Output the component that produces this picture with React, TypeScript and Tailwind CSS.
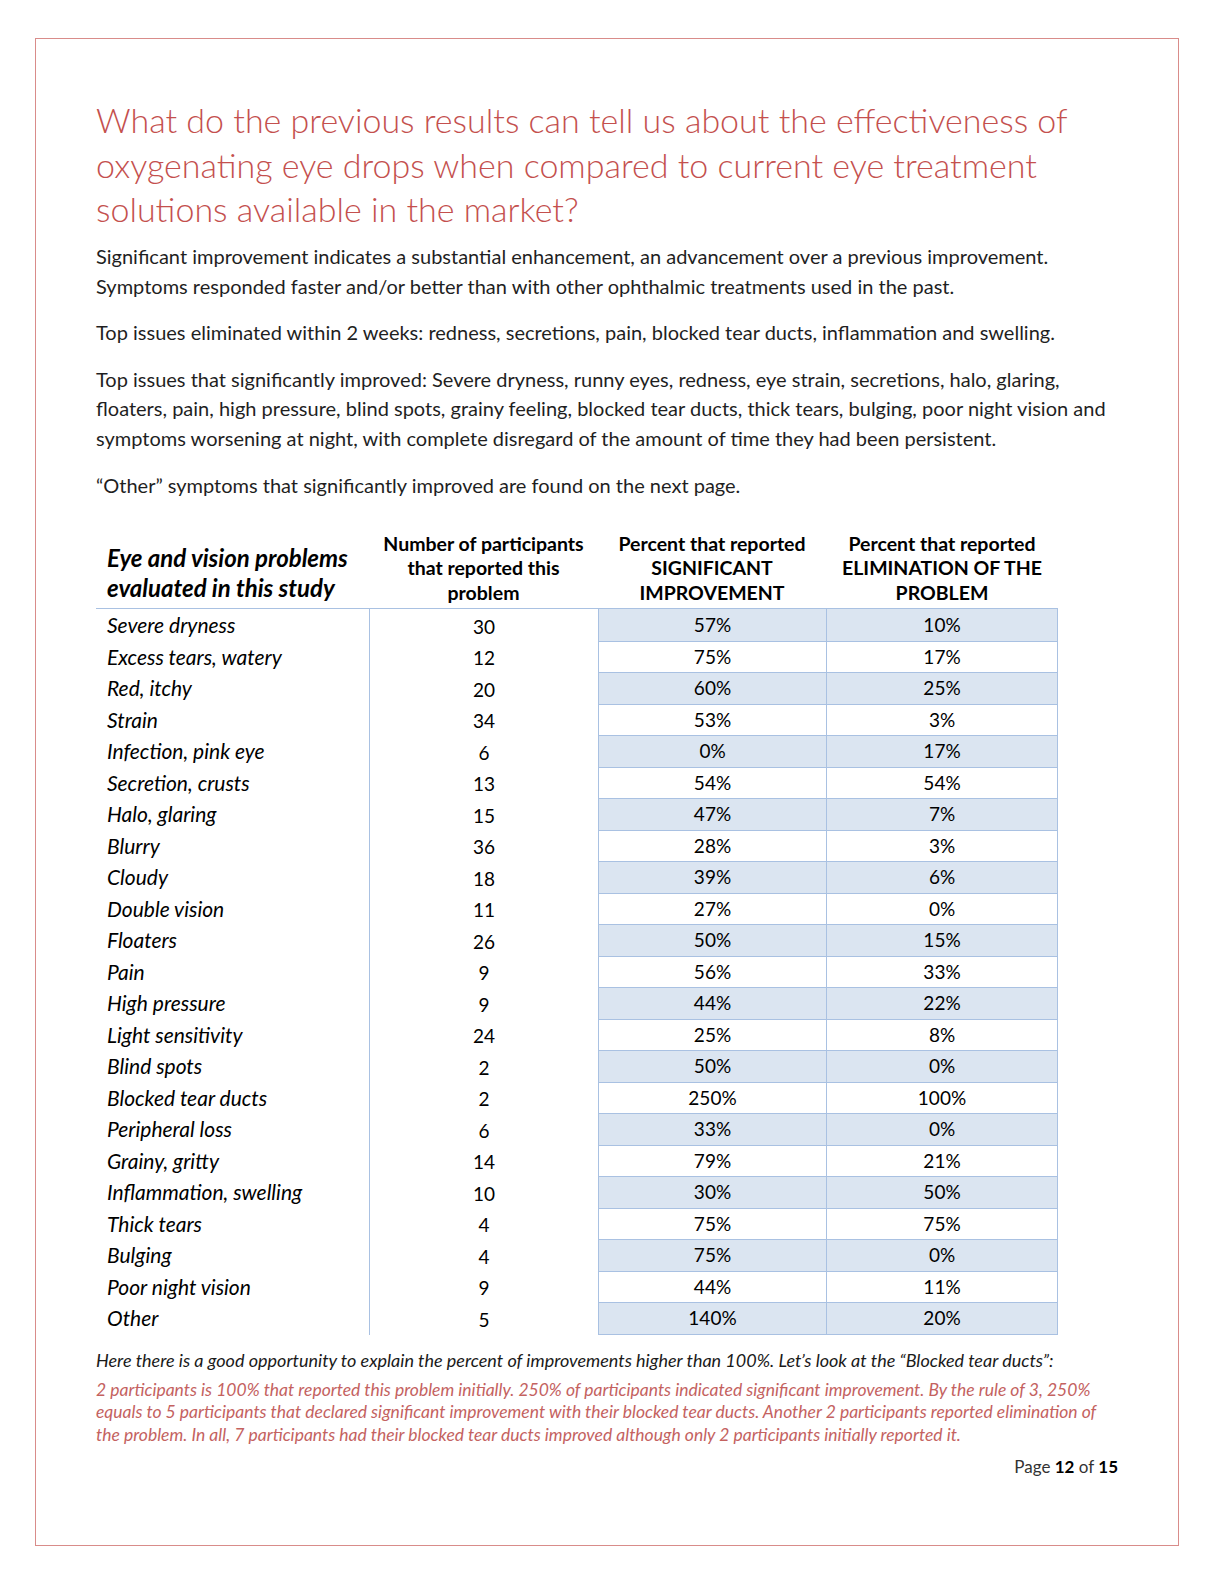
const ROWS: [string, string, string, string][] = [
  ['Severe dryness', '30', '57%', '10%'],
  ['Excess tears, watery', '12', '75%', '17%'],
  ['Red, itchy', '20', '60%', '25%'],
  ['Strain', '34', '53%', '3%'],
  ['Infection, pink eye', '6', '0%', '17%'],
  ['Secretion, crusts', '13', '54%', '54%'],
  ['Halo, glaring', '15', '47%', '7%'],
  ['Blurry', '36', '28%', '3%'],
  ['Cloudy', '18', '39%', '6%'],
  ['Double vision', '11', '27%', '0%'],
  ['Floaters', '26', '50%', '15%'],
  ['Pain', '9', '56%', '33%'],
  ['High pressure', '9', '44%', '22%'],
  ['Light sensitivity', '24', '25%', '8%'],
  ['Blind spots', '2', '50%', '0%'],
  ['Blocked tear ducts', '2', '250%', '100%'],
  ['Peripheral loss', '6', '33%', '0%'],
  ['Grainy, gritty', '14', '79%', '21%'],
  ['Inflammation, swelling', '10', '30%', '50%'],
  ['Thick tears', '4', '75%', '75%'],
  ['Bulging', '4', '75%', '0%'],
  ['Poor night vision', '9', '44%', '11%'],
  ['Other', '5', '140%', '20%'],
];

const font = "font-['Lato','Open_Sans',sans-serif]";

function Para({ lines }: { lines: string[] }) {
  return (
    <p className="mb-[17px] text-[20px] leading-[29.6px] text-[#1f1f1f] whitespace-nowrap">
      {lines.map((l, i) => (
        <span key={i} className="block">{l}</span>
      ))}
    </p>
  );
}

export default function App() {
  return (
    <div className={`${font} bg-white w-[1215px] min-h-[1582px] pt-[38px] pl-[35px]`}>
      <div className="w-[1144px] h-[1508px] border border-[#d98c8a] pl-[60px] pr-[60px] pt-[59px]">
        {/* Title */}
        <h1 className="text-[34px] font-light leading-[44.5px] text-[#c4504e] whitespace-nowrap mb-[10.5px]">
          <span className="block">What do the previous results can tell us about the effectiveness of</span>
          <span className="block">oxygenating eye drops when compared to current eye treatment</span>
          <span className="block">solutions available in the market?</span>
        </h1>

        <Para
          lines={[
            'Significant improvement indicates a substantial enhancement, an advancement over a previous improvement.',
            'Symptoms responded faster and/or better than with other ophthalmic treatments used in the past.',
          ]}
        />
        <Para
          lines={[
            'Top issues eliminated within 2 weeks: redness, secretions, pain, blocked tear ducts, inflammation and swelling.',
          ]}
        />
        <Para
          lines={[
            'Top issues that significantly improved: Severe dryness, runny eyes, redness, eye strain, secretions, halo, glaring,',
            'floaters, pain, high pressure, blind spots, grainy feeling, blocked tear ducts, thick tears, bulging, poor night vision and',
            'symptoms worsening at night, with complete disregard of the amount of time they had been persistent.',
          ]}
        />
        <Para lines={['\u201cOther\u201d symptoms that significantly improved are found on the next page.']} />

        {/* Table */}
        <div className="mt-[25px] w-[962px] text-black">
          <div className="grid grid-cols-[273px_229px_228px_232px] h-[84px] border-b border-[#a9c1e2]">
            <div className="flex items-end pl-[11px] pb-[5px] text-[24px] font-bold italic leading-[30px] whitespace-nowrap">
              <div>
                Eye and vision problems
                <br />
                evaluated in this study
              </div>
            </div>
            <div className="flex items-end justify-center pb-[3px] text-center text-[19.5px] font-bold leading-[24.5px] whitespace-nowrap">
              <div>
                Number of participants
                <br />
                that reported this
                <br />
                problem
              </div>
            </div>
            <div className="flex items-end justify-center pb-[3px] text-center text-[19.5px] font-bold leading-[24.5px] whitespace-nowrap">
              <div>
                Percent that reported
                <br />
                SIGNIFICANT
                <br />
                IMPROVEMENT
              </div>
            </div>
            <div className="flex items-end justify-center pb-[3px] text-center text-[19.5px] font-bold leading-[24.5px] whitespace-nowrap">
              <div>
                Percent that reported
                <br />
                ELIMINATION OF THE
                <br />
                PROBLEM
              </div>
            </div>
          </div>

          <div className="grid grid-cols-[273px_229px_460px]">
            <div>
              {ROWS.map(r => (
                <div key={r[0]} className="h-[31.5px] flex items-center pl-[11px] text-[21px] italic whitespace-nowrap">
                  {r[0]}
                </div>
              ))}
            </div>
            <div className="border-l border-[#a9c1e2]">
              {ROWS.map(r => (
                <div key={r[0]} className="h-[31.5px] flex items-center justify-center pt-[4px] text-[19px]">
                  {r[1]}
                </div>
              ))}
            </div>
            <div className="border border-t-0 border-[#a9c1e2]">
              {ROWS.map((r, i) => (
                <div
                  key={r[0]}
                  className={`grid grid-cols-[228px_1fr] h-[31.5px] text-[19px] ${
                    i > 0 ? 'border-t border-[#a9c1e2]' : ''
                  } ${i % 2 === 0 ? 'bg-[#dbe5f1]' : 'bg-white'}`}
                >
                  <div className="flex items-center justify-center border-r border-[#a9c1e2]">{r[2]}</div>
                  <div className="flex items-center justify-center">{r[3]}</div>
                </div>
              ))}
            </div>
          </div>
        </div>

        {/* Notes */}
        <p className="mt-[14px] text-[18px] italic leading-[22px] text-[#1a1a1a] whitespace-nowrap">
          Here there is a good opportunity to explain the percent of improvements higher than 100%. Let&rsquo;s look at the &ldquo;Blocked tear ducts&rdquo;:
        </p>
        <p className="mt-[8.5px] text-[17.5px] italic leading-[22.2px] text-[#c4625f] whitespace-nowrap">
          <span className="block">
            2 participants is 100% that reported this problem initially. 250% of participants indicated significant improvement. By the rule of 3, 250%
          </span>
          <span className="block">
            equals to 5 participants that declared significant improvement with their blocked tear ducts. Another 2 participants reported elimination of
          </span>
          <span className="block">
            the problem. In all, 7 participants had their blocked tear ducts improved although only 2 participants initially reported it.
          </span>
        </p>

        <p className="mt-[10px] text-right text-[17px] leading-[22px] text-[#333]">
          Page <span className="font-bold text-black">12</span> of <span className="font-bold text-black">15</span>
        </p>
      </div>
    </div>
  );
}
